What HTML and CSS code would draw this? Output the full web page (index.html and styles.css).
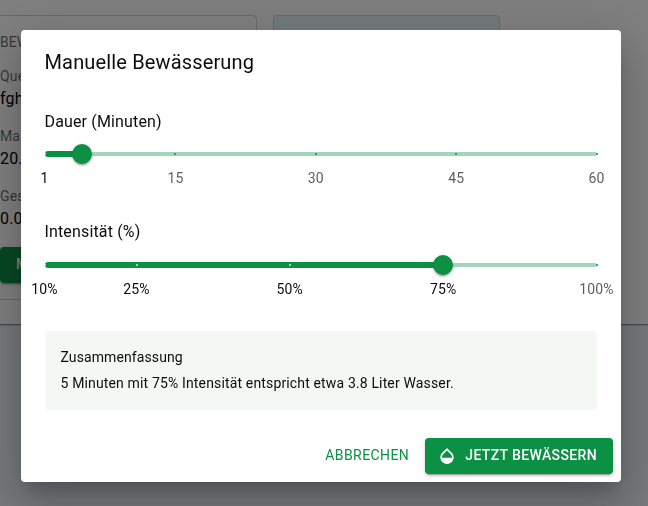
FILE: index.html
```html
<!DOCTYPE html>
<html lang="de">
<head>
<meta charset="utf-8">
<title>Manuelle Bewässerung</title>
<link rel="stylesheet" href="styles.css">
</head>
<body>
<main class="page">
  <section class="paper">
    <div class="card info">
      <div class="overline">BEW</div>
      <dl class="facts">
        <div><dt>Que</dt><dd>fgh</dd></div>
        <div><dt>Max</dt><dd>20.</dd></div>
        <div><dt>Ges</dt><dd>0.0</dd></div>
      </dl>
      <button class="btn contained start">M</button>
    </div>
    <div class="card tinted"></div>
  </section>
</main>
<div class="backdrop">
  <div class="dialog" role="dialog">
    <h2 class="title">Manuelle Bewässerung</h2>
    <div class="content">
      <div class="field">
        <p class="label">Dauer (Minuten)</p>
        <div class="slider">
          <span class="rail"></span><span class="track" style="width:6.78%"></span>
          <span class="mark on" style="left:0%"></span><span class="mark" style="left:23.6%"></span><span class="mark" style="left:49.15%"></span><span class="mark" style="left:74.5%"></span><span class="mark" style="left:100%"></span>
          <span class="tick active" style="left:0%">1</span><span class="tick" style="left:23.73%">15</span><span class="tick" style="left:49.15%">30</span><span class="tick" style="left:74.58%">45</span><span class="tick" style="left:100%">60</span>
          <span class="thumb" style="left:6.78%"></span>
        </div>
      </div>
      <div class="field">
        <p class="label">Intensität (%)</p>
        <div class="slider">
          <span class="rail"></span><span class="track" style="width:72.22%"></span>
          <span class="mark on" style="left:0%"></span><span class="mark on" style="left:16.67%"></span><span class="mark on" style="left:44.44%"></span><span class="mark on" style="left:72.22%"></span><span class="mark" style="left:100%"></span>
          <span class="tick active" style="left:0%">10%</span><span class="tick active" style="left:16.67%">25%</span><span class="tick active" style="left:44.44%">50%</span><span class="tick active" style="left:72.22%">75%</span><span class="tick" style="left:100%">100%</span>
          <span class="thumb" style="left:72.22%"></span>
        </div>
      </div>
      <div class="summary">
        <p class="summary-title">Zusammenfassung</p>
        <p class="summary-text">5 Minuten mit 75% Intensität entspricht etwa 3.8 Liter Wasser.</p>
      </div>
    </div>
    <div class="actions">
      <button class="btn text">Abbrechen</button>
      <button class="btn contained"><svg viewBox="0 0 24 24" width="20" height="20"><path fill="currentColor" d="M17.66 8 12 2.35 6.34 8C4.78 9.56 4 11.64 4 13.64s.78 4.11 2.34 5.67 3.61 2.35 5.66 2.35 4.1-.79 5.66-2.35S20 15.64 20 13.64 19.22 9.56 17.66 8zM6 14c.01-2 .62-3.27 1.76-4.4L12 5.27l4.24 4.38C17.38 10.77 17.99 12 18 14H6z"/></svg>Jetzt bewässern</button>
    </div>
  </div>
</div>
</body>
</html>
```
FILE: styles.css
```css
* { box-sizing: border-box; }
body {
  margin: 0;
  height: 506px;
  overflow: hidden;
  font-family: Roboto, sans-serif;
  color: #0c0c0c;
  background: #edf1f5;
}
p, h2, dl, dd { margin: 0; }
.page { height: 506px; overflow: hidden; }
.paper {
  display: flex;
  gap: 16px;
  height: 324px;
  margin-left: -17px;
  padding: 15px 0 24px;
  background: #fff;
  box-shadow: 0 1px 1px rgba(0, 0, 0, .35), 0 1px 3px rgba(0, 0, 0, .12);
}
.card {
  border: 1px solid #d0d0d0;
  border-radius: 4px;
}
.info { width: 274px; padding: 16px; }
.tinted { width: 227px; background: #e8f3f7; }
.overline { font-size: 14px; line-height: 20px; color: rgba(0, 0, 0, .6); }
.facts { display: grid; gap: 16px; margin-top: 14px; }
.facts dt { font-size: 14px; line-height: 20px; letter-spacing: .15px; color: rgba(0, 0, 0, .6); }
.facts dd { padding-top: 1px; font-size: 16px; line-height: 23px; letter-spacing: .15px; color: #000; }
.start { width: 160px; margin-top: 17px; }
.backdrop {
  position: fixed;
  inset: 0;
  padding: 30px 27px 24px 21px;
  background: rgba(0, 0, 0, .5);
}
.dialog {
  width: 600px;
  height: 452px;
  background: #fff;
  border-radius: 4px;
  box-shadow: 0 11px 15px -7px rgba(0, 0, 0, .2), 0 24px 38px 3px rgba(0, 0, 0, .14), 0 9px 46px 8px rgba(0, 0, 0, .12);
}
.title {
  padding: 16px 23.5px;
  font-size: 20px;
  font-weight: 400;
  line-height: 32px;
  letter-spacing: .15px;
}
.content { padding: 16px 24px 0; }
.field { height: 110px; }
.label { font-size: 16px; line-height: 24px; letter-spacing: .15px; text-indent: -.5px; }
.slider { position: relative; height: 4px; margin-top: 18px; color: #0c9044; }
.field + .field .slider { margin-top: 19px; }
.slider span { position: absolute; }
.rail { width: 100%; height: 4px; border-radius: 12px; background: currentColor; opacity: .38; }
.track { left: 0; top: -1px; height: 6px; border-radius: 12px; background: currentColor; }
.mark { top: 1px; width: 2px; height: 2px; border-radius: 1px; background: currentColor; transform: translateX(-1px); }
.mark.on { background: #fff; opacity: .8; }
.tick {
  top: 16px;
  transform: translateX(calc(-50% - .5px));
  white-space: nowrap;
  font-size: 14px;
  line-height: 20px;
  letter-spacing: .15px;
  color: rgba(0, 0, 0, .65);
}
.tick.active { color: #0c0c0c; }
.thumb {
  top: -8px;
  width: 20px;
  height: 20px;
  margin-left: -10.4px;
  border-radius: 50%;
  background: currentColor;
  box-shadow: 0 3px 1px -2px rgba(0, 0, 0, .2), 0 2px 2px rgba(0, 0, 0, .14), 0 1px 5px rgba(0, 0, 0, .12);
}
.summary {
  height: 79px;
  margin-top: 1px;
  padding: 15px 15.5px;
  border-radius: 4px;
  background: #f3f8f5;
  font-size: 14px;
}
.summary-title { line-height: 22px; letter-spacing: .1px; }
.summary-text { margin-top: 5px; line-height: 20px; letter-spacing: .15px; }
.actions { display: flex; justify-content: flex-end; gap: 8px; padding: 28px 8px 8px; }
.btn {
  display: flex;
  align-items: center;
  height: 36px;
  border: 0;
  border-radius: 4px;
  font: 500 14px/24px Roboto, sans-serif;
  letter-spacing: .37px;
  text-transform: uppercase;
  white-space: nowrap;
}
.text { padding: 5px 7.5px 7px 8px; color: #0c9044; background: transparent; font-weight: 400; letter-spacing: .42px; }
.contained {
  padding: 5px 16px 7px;
  color: #fff;
  background: #0c9044;
  box-shadow: 0 3px 1px -2px rgba(0, 0, 0, .2), 0 2px 2px rgba(0, 0, 0, .14), 0 1px 5px rgba(0, 0, 0, .12);
}
.contained svg { margin: 2px 8.5px 0 -4px; }
```
